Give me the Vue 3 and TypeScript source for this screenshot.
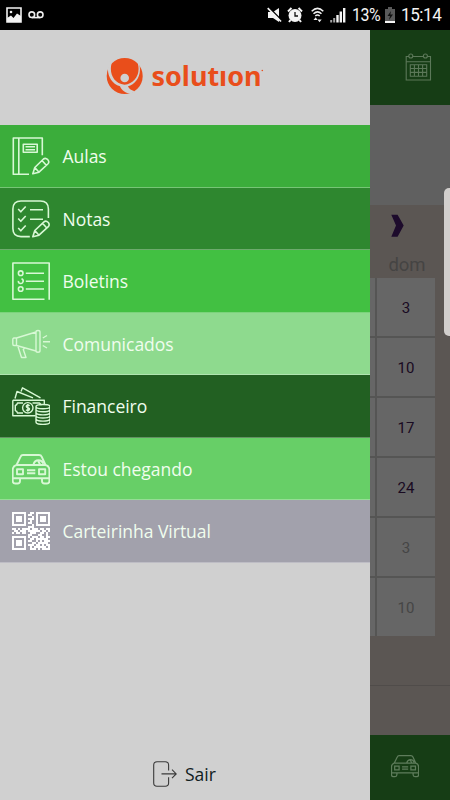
<script setup lang="ts">
interface MenuItem {
  label: string
  icon: string
  tone: string
}

const items: MenuItem[] = [
  { label: 'Aulas', icon: 'book', tone: 'aulas' },
  { label: 'Notas', icon: 'checks', tone: 'notas' },
  { label: 'Boletins', icon: 'list', tone: 'boletins' },
  { label: 'Comunicados', icon: 'horn', tone: 'comunicados' },
  { label: 'Financeiro', icon: 'money', tone: 'financeiro' },
  { label: 'Estou chegando', icon: 'car', tone: 'chegando' },
  { label: 'Carteirinha Virtual', icon: 'qr', tone: 'carteirinha' },
]

const days = [
  { n: 3, muted: false },
  { n: 10, muted: false },
  { n: 17, muted: false },
  { n: 24, muted: false },
  { n: 3, muted: true },
  { n: 10, muted: true },
]

const qrRows: string[] = [
  '1111111001101111111',
  '1000001011001000001',
  '1011101000101011101',
  '1011101011101011101',
  '1011101001001011101',
  '1000001011001000001',
  '1111111000101111111',
  '0000000011100000000',
  '1101011110111011011',
  '0110111011111101101',
  '1011011001110011010',
  '0000000011000110010',
  '1111111010111011011',
  '1000001001101111110',
  '1011101011001010111',
  '1011101000110111110',
  '1011101011101101011',
  '1000001001011111101',
  '1111111001110101111',
]

const qrPath = qrRows
  .map((row, y) => [...row].map((c, x) => (c === '1' ? `M${x * 2} ${y * 2}h2v2h-2z` : '')).join(''))
  .join('')

const carPath =
  'M4.5 15L8.5 6.8Q9.2 5 11 5H27Q29 5 29.8 6.8L33.5 15M4.5 15H33.5Q37.4 16 37.4 20V28.3H.7V20Q.7 16 4.5 15M.7 28V31Q.7 33.5 3.2 33.5H5.5Q8 33.5 8 31V28.5M30 28.5V31Q30 33.5 32.5 33.5H35Q37.4 33.5 37.4 31V28M5 19.3H11V24.2H5ZM27 19.3H33.2V24.2H27ZM15 20.3H23.3M15 23.3H23.3M21.5 14.5Q22.5 10.2 26.5 10.2Q30 10.2 31.3 13.8M26 10.5L28 14.5'
</script>

<template>
  <div class="screen">
    <header class="status">
      <div class="status-side">
        <svg class="picture" width="16" height="16" viewBox="0 0 16 16">
          <path d="M1 1H15V15H1Z" fill="none" stroke="#f2f2f2" stroke-width="1.6" />
          <path d="M1 15V11L5 8.5L7.5 11L11 6.5L15 9V15Z" fill="#f2f2f2" />
          <circle cx="5" cy="5" r="1.3" fill="#f2f2f2" />
        </svg>
        <svg class="voicemail" width="16" height="8" viewBox="0 0 16 8" fill="none" stroke="#eee" stroke-width="1.6">
          <circle cx="3.8" cy="3.7" r="2.8" />
          <circle cx="12.2" cy="3.7" r="2.8" />
          <path d="M3.8 6.6H12.2" />
        </svg>
      </div>
      <div class="status-side right">
        <svg width="15" height="16" viewBox="0 0 15 16" fill="#f4f4f4">
          <path d="M1 5H6L12 1V15L6 11H1Z" />
          <path d="M1.5 0L15 13.5" stroke="#000" stroke-width="1.5" />
          <path d="M.7 1.2L14 14.5" stroke="#f4f4f4" stroke-width="1.7" />
        </svg>
        <svg class="alarm" width="16" height="16" viewBox="0 0 16 16">
          <circle cx="8" cy="8.5" r="6.5" fill="#f4f4f4" />
          <path d="M1 4.5L4.5 1M15 4.5L11.5 1M3.5 13L2 15M12.5 13L14 15" stroke="#f4f4f4" stroke-width="2" />
          <path d="M8 5V9H11" fill="none" stroke="#111" stroke-width="1.3" />
        </svg>
        <svg class="wifi" width="13" height="16" viewBox="0 0 13 16" fill="none" stroke="#eee" stroke-width="1.5">
          <path d="M.7 4.2Q6.5 -1.4 12.3 4.2M2.5 6.7Q6.5 3 10.5 6.7M4.3 9Q6.5 7 8.7 9" />
          <path d="M2.5 13L4.7 10.3L6.5 13ZM6.5 12.4L8.5 15.3L10.7 12.4Z" fill="#eee" stroke="none" />
        </svg>
        <svg class="signal" width="16" height="16" viewBox="0 0 16 16">
          <path d="M1.2 15.5V13M4.2 15.5V11" stroke="#a5a5a5" stroke-width="2" />
          <path d="M7.5 15.5V8M10.8 15.5V4.5M14.2 15.5V1" stroke="#f4f4f4" stroke-width="2.4" />
        </svg>
        <span class="percent">13%</span>
        <svg class="battery" width="10" height="16" viewBox="0 0 10 16">
          <path d="M3 0H7V2H10V16H0V2H3Z" fill="#5a5a5a" />
          <path d="M0 14H10V16H0Z" fill="#f4f4f4" />
          <path d="M6 4L2.5 9H5L4 13L8 7.5H5.3Z" fill="#111" />
        </svg>
        <span class="clock">15:14</span>
      </div>
    </header>

    <div class="body">
      <aside class="drawer">
        <div class="brand">
          <svg width="158" height="40" viewBox="0 0 158 40">
            <circle cx="18.7" cy="21" r="18" fill="#e94e1b" />
            <path d="M7.5 3.5C1.5 15 6 28.5 18.5 29.8C30 28 36 17 30.5 5L33 8C36.5 20 30 29.5 22 31.2Q23 34.5 28.5 36.3L25 39C19.5 38 15.5 35.5 14 31.3C2.5 28 -1 14 4.5 5.5Z" fill="#d0d0d0" />
            <circle cx="18.7" cy="23" r="4.3" fill="#d0d0d0" />
            <text x="45.5" y="31.3" textLength="110" lengthAdjust="spacingAndGlyphs" class="wordmark">solutıon</text>
            <circle cx="156.3" cy="15.5" r=".8" fill="#e94e1b" />
          </svg>
        </div>

        <nav class="menu">
          <a v-for="item in items" :key="item.label" class="item" :class="item.tone">
            <svg class="icon" width="38" height="38" viewBox="0 0 38 38">
              <g v-if="item.icon === 'book'">
                <path d="M30.3 18.3V1H1.3V37.3H17M6.8 1V37.3M11.3 7.3H25.2V15.3H11.3ZM13.5 9.8H23M13.5 12.7H23" />
                <path d="M20.8 36.7L22.8 30.5L31.5 22Q33.5 20.5 35.8 22.7Q37.8 25 35.8 27L27 35.2ZM22.8 30.5L27 35.2M30 23.5L34.3 28.3" />
              </g>
              <g v-else-if="item.icon === 'checks'">
                <path d="M36.4 18V9Q36.4 1 28.4 1H9Q.9 1 .9 9V28.5Q.9 36.6 9 36.6H17.8M6.2 9L8.8 11.8L13.7 6.5M6.2 18.5L8.8 21.3L13.7 16M6.2 28L8.8 30.8L13.7 25.5M18 9.8H31M18 19.3H31" />
                <path d="M20.8 36.7L22.8 30.5L32 21.8Q34 20.3 36.3 22.5Q38 24.7 36.3 26.7L27 35.2ZM22.8 30.5L27 35.2M30.5 23.3L34.8 28" />
              </g>
              <g v-else-if="item.icon === 'list'">
                <path d="M32.5 37.2H.9V1H37.2V37.7M13.8 11.2H32M13.8 19.2H32M13.8 27H32" />
                <circle cx="8.7" cy="11.2" r="2.3" />
                <path d="M9.5 16.8A2.4 2.4 0 1 1 6.4 18.8" />
                <circle cx="8.7" cy="27" r="2.3" />
              </g>
              <g v-else-if="item.icon === 'horn'" class="fine">
                <path d="M4.5 13H2Q.8 13 .8 14.5V19Q.8 20.5 2 20.5H4.5ZM4.5 13L24 7V26L4.5 20.5M24 7Q24 5.5 26 5.5Q28 5.5 28 7V25.8Q28 27.3 26 27.3Q24 27.3 24 25.8M5.8 21L9.5 32.5H14L11.3 24.5L12.5 23M30.8 13L35 10.5M31 16.8H38M30.8 20.5L35 23" />
              </g>
              <g v-else-if="item.icon === 'money'" class="fine">
                <path d="M3 11.5L5 4.5L21 10.8M9 4.5L10.5 .8L28.5 10.8M.8 13.2H32.3V17M.8 13.2V28.8H23.5M11 16H5.5Q5 18 3.3 18.5V23.5Q5 24 5.5 26H11M20.5 16H27.5L29.5 18" />
                <circle cx="15.8" cy="20.8" r="5.2" />
                <path d="M17.7 18.8Q15.8 17.3 14.5 18.7Q13.7 20.2 15.8 20.7Q18 21.3 17.3 22.8Q16 24.5 14 22.7M15.8 17V24.7" />
                <path d="M24 19.5Q24 17.5 31 17.5Q38 17.5 38 19.5Q38 21.8 31 21.8Q24 21.8 24 19.5V35Q24 37.4 31 37.4Q38 37.4 38 35V19.5M24 22.8Q25 24.8 31 24.8Q37 24.8 38 22.8M24 25.9Q25 27.9 31 27.9Q37 27.9 38 25.9M24 29Q25 31 31 31Q37 31 38 29M24 32.1Q25 34.1 31 34.1Q37 34.1 38 32.1" />
              </g>
              <path v-else-if="item.icon === 'car'" class="bold" :d="carPath" />
              <path v-else class="solid" :d="qrPath" />
            </svg>
            <span>{{ item.label }}</span>
          </a>
        </nav>

        <a class="logout">
          <svg width="25" height="26" viewBox="0 0 25 26" fill="none" stroke="#3a3a3a" stroke-width="1.1">
            <path d="M15.6 9.5V4Q15.6 .7 12.3 .7H4Q.7 .7 .7 4V22Q.7 25.2 4 25.2H12.3Q15.6 25.2 15.6 22V16.3M8.5 12.9H23.2M19 8.7L23.2 12.9L19 17.1" />
          </svg>
          <span>Sair</span>
        </a>
      </aside>

      <main class="page">
        <div class="topbar">
          <svg width="27" height="28" viewBox="0 0 27 28" fill="none" stroke="#5c7859" stroke-width="1.1">
            <path d="M4 3.5H1.2V27H25.5V3.5H22.5M7.5 3.5H18.5M1.2 8.7H25.5M5.3 11.7H21.7V23.3H5.3ZM9.4 11.7V23.3M13.5 11.7V23.3M17.6 11.7V23.3M5.3 15.5H21.7M5.3 19.4H21.7" />
            <circle cx="5.8" cy="3" r="2" />
            <circle cx="20.4" cy="3" r="2" />
          </svg>
        </div>
        <div class="banner"></div>
        <div class="calendar">
          <svg class="next" width="13" height="24" viewBox="0 0 13 24">
            <path d="M.3 .8H6.6L12.7 11.5L6.6 22.8H.3L5 11.5Z" fill="#1d0b2c" />
          </svg>
          <div class="weekday">dom</div>
          <div class="grid">
            <template v-for="(day, i) in days" :key="i">
              <div class="cell"></div>
              <div class="cell" :class="{ muted: day.muted }">{{ day.n }}</div>
            </template>
          </div>
          <div class="rule"></div>
        </div>
        <div class="bottombar">
          <svg width="28" height="28" viewBox="0 0 38 38" fill="none" stroke="#5f7d5c" stroke-width="1.7">
            <path :d="carPath" />
          </svg>
        </div>
      </main>
      <div class="edge"></div>
    </div>
  </div>
</template>

<style>
body {
  margin: 0;
  background: #000;
}
</style>

<style scoped>
.screen {
  position: relative;
  width: 450px;
  height: 800px;
  overflow: hidden;
  display: flex;
  flex-direction: column;
  font-family: 'Open Sans', 'Noto Sans', sans-serif;
}

.status {
  height: 30px;
  flex: none;
  display: flex;
  justify-content: space-between;
  background: #000;
  color: #f4f4f4;
  font: 19px/30px Roboto, sans-serif;
}

.status-side {
  display: flex;
  align-items: center;
  padding-left: 6px;
}

.voicemail {
  margin-left: 6px;
}

.right {
  padding: 0 7px 0 0;
}

.alarm {
  margin-left: 5px;
}

.wifi {
  margin-left: 8px;
}

.signal {
  margin-left: 6px;
}

.percent {
  width: 30px;
  margin-left: 6px;
  letter-spacing: -0.5px;
  transform: scaleX(0.84);
  transform-origin: left;
}

.battery {
  margin-left: 3px;
}

.clock {
  width: 42px;
  margin-left: 6px;
  letter-spacing: -0.5px;
  transform: scaleX(0.9);
  transform-origin: left;
}

.body {
  flex: 1;
  display: flex;
  min-height: 0;
}

.drawer {
  width: 370px;
  flex: none;
  display: flex;
  flex-direction: column;
  background: #d0d0d0;
}

.brand {
  height: 95px;
  flex: none;
  display: flex;
  justify-content: center;
  align-items: flex-start;
  box-sizing: border-box;
  padding-top: 25px;
}

.wordmark {
  font-family: 'Noto Sans', sans-serif;
  font-size: 27px;
  font-weight: 700;
  fill: #e94e1b;
}

.menu {
  display: flex;
  flex-direction: column;
}

.item {
  height: 62.5px;
  box-sizing: border-box;
  display: flex;
  align-items: center;
  gap: 12.5px;
  padding: 1px 0 0 12px;
  border-bottom: 1px solid rgba(255, 255, 255, 0.3);
  color: #f0fdee;
  font-size: 17.5px;
}

.item span {
  letter-spacing: -0.02px;
}

.icon {
  fill: none;
  stroke: #d8f8d5;
  stroke-width: 1.6;
  stroke-linejoin: round;
}

.fine {
  stroke-width: 1.4;
}

.bold {
  stroke-width: 1.9;
}

.solid {
  fill: #fff;
  stroke: none;
  shape-rendering: crispEdges;
}

.aulas { background: #3bad3b; }
.notas { background: #2e872f; }
.boletins { background: #42c042; }
.comunicados { background: #8eda8e; }
.financeiro { background: #226022; }
.chegando { background: #67cf67; }
.carteirinha { background: #a2a1ac; }

.logout {
  display: flex;
  align-items: center;
  gap: 7px;
  margin: auto 0 13px 153px;
  color: #10201e;
  font-size: 17.5px;
  line-height: 26px;
}

.page {
  flex: 1;
  display: flex;
  flex-direction: column;
}

.topbar {
  height: 75px;
  display: flex;
  align-items: center;
  justify-content: flex-end;
  box-sizing: border-box;
  padding: 0 18px 1px 0;
  background: #163d15;
}

.banner {
  height: 100px;
  background: #606060;
}

.calendar {
  height: 530px;
  display: flex;
  flex-direction: column;
  background: #5b5653;
}

.next {
  flex: none;
  margin: 9px 0 0 21px;
}

.weekday {
  width: 58px;
  height: 40px;
  margin-left: 8px;
  text-align: center;
  color: #454443;
  font: 18.5px/55px Roboto, sans-serif;
}

.grid {
  display: grid;
  grid-template-columns: 5px 58px;
  grid-auto-rows: 58px;
  gap: 2px;
  width: 65px;
  background: #555554;
}

.cell {
  display: flex;
  align-items: center;
  justify-content: center;
  box-sizing: border-box;
  padding-top: 1px;
  background: #666;
  color: #190a22;
  font: 15px Roboto, sans-serif;
}

.muted {
  color: #454545;
}

.rule {
  height: 1px;
  margin-top: 49px;
  background: #504c4a;
}

.bottombar {
  flex: 1;
  display: flex;
  align-items: center;
  padding: 0 0 3px 21px;
  background: #163d15;
}

.edge {
  position: absolute;
  top: 188px;
  right: 0;
  width: 6px;
  height: 148px;
  border-radius: 5px 0 0 5px;
  background: #d2cfcd;
}
</style>
